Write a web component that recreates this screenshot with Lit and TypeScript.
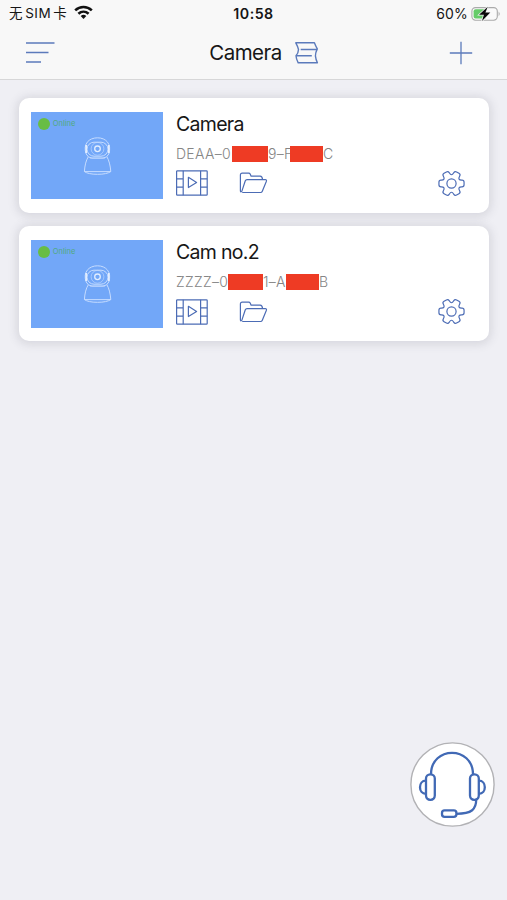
import { LitElement, html, css } from "lit";
import { customElement, property } from "lit/decorators.js";

interface Segment {
  text?: string;
  width: number;
}

interface Device {
  name: string;
  serial: Segment[];
}

const devices: Device[] = [
  {
    name: "Camera",
    serial: [
      { text: "DEAA–0", width: 56 },
      { width: 36 },
      { text: "9–F", width: 22 },
      { width: 33 },
      { text: "C", width: 10 },
    ],
  },
  {
    name: "Cam no.2",
    serial: [
      { text: "ZZZZ–0", width: 52 },
      { width: 35 },
      { text: "1–A", width: 23 },
      { width: 33 },
      { text: "B", width: 10 },
    ],
  },
];

// Outline of a six-toothed gear centred on the origin.
function gearPath(): string {
  const points: [number, number][] = [];
  for (let i = 0; i < 6; i++) {
    for (const [offset, radius] of [[-23, 8.8], [-15, 13], [15, 13], [23, 8.8]]) {
      const a = ((i * 60 + offset) * Math.PI) / 180;
      points.push([Math.cos(a) * radius, Math.sin(a) * radius]);
    }
  }
  const n = points.length;
  let d = "";
  points.forEach((p, i) => {
    const prev = points[(i + n - 1) % n];
    const next = points[(i + 1) % n];
    const toward = (q: [number, number]) => {
      const len = Math.hypot(q[0] - p[0], q[1] - p[1]);
      const t = Math.min(2, len / 2) / len;
      return `${(p[0] + (q[0] - p[0]) * t).toFixed(2)} ${(p[1] + (q[1] - p[1]) * t).toFixed(2)}`;
    };
    d += `${i ? "L" : "M"}${toward(prev)}Q${p[0].toFixed(2)} ${p[1].toFixed(2)} ${toward(next)}`;
  });
  return d + "Z";
}

const gear = gearPath();

@customElement("status-bar")
class StatusBar extends LitElement {
  static styles = css`
    :host { display: grid; grid-template-columns: 1fr auto 1fr; align-items: center; height: 27px; padding: 0 6px 0 9px; color: #151515; font: 14px/27px Inter, "Noto Sans CJK SC", sans-serif; }
    .left, .right { display: flex; align-items: center; }
    .carrier { font-size: 13.5px; letter-spacing: 0.45px; white-space: nowrap; word-spacing: -2px; }
    .wifi { margin: -2px 0 0 7px; }
    .time { font-weight: 600; font-size: 14.2px; letter-spacing: 0.5px; margin-left: -3px; }
    .right { justify-content: flex-end; gap: 3px; }
    .percent { font-size: 14px; letter-spacing: 0.2px; }
    svg { display: block; }
  `;
  render() {
    return html`
      <div class="left">
        <span class="carrier">无 SIM 卡</span>
        <svg class="wifi" width="19" height="15" viewBox="0 0 19 15">
          <g fill="none" stroke="#111" stroke-width="2.6">
            <path d="M1.2 5.4C6 .9 13 .9 17.8 5.4" />
            <path d="M4.4 8.7C7.4 6 11.6 6 14.6 8.7" />
          </g>
          <path d="M6.7 11Q9.5 8.6 12.3 11L9.5 14Z" fill="#111" />
        </svg>
      </div>
      <span class="time">10:58</span>
      <div class="right">
        <span class="percent">60%</span>
        <svg width="30" height="16" viewBox="0 0 30 16">
          <rect x=".9" y="1.6" width="25.4" height="12.6" rx="3.6" fill="#fafafa" stroke="#aaa" stroke-width="1.1" />
          <path d="M4.6 3.2H14.8V12.6H4.6Q2.6 12.6 2.6 10.6V5.2Q2.6 3.2 4.6 3.2Z" fill="#66cc6a" />
          <path d="M27.6 5.6Q29.8 7.9 27.6 10.2Z" fill="#aaa" />
          <path d="M16.8 .8L8 8.8H12.9L11 15L19.3 6.6H14.4Z" fill="#0b0b0b" stroke="#f8f8f8" stroke-width="1.4" paint-order="stroke" />
        </svg>
      </div>
    `;
  }
}

@customElement("nav-bar")
class NavBar extends LitElement {
  static styles = css`
    :host { display: grid; grid-template-columns: 1fr auto 1fr; align-items: center; height: 52px; padding: 0 34px 0 26px; }
    .title { display: flex; align-items: center; gap: 13px; margin-left: 29px; color: #161616; font: 20.5px/26px Inter, sans-serif; letter-spacing: -0.55px; }
    .add { justify-self: end; }
    svg { display: block; fill: none; stroke: #5b7abb; }
  `;
  render() {
    return html`
      <svg width="30" height="22" viewBox="0 0 30 22" stroke-width="1.5">
        <path d="M0 .9H28.5M0 10.4H22.5M0 19.9H15" />
      </svg>
      <div class="title">
        <span>Camera</span>
        <svg width="24" height="22" viewBox="0 0 24 22" stroke-width="1.4" stroke-linejoin="round">
          <path d="M.8 .8H19.4Q20.6 4 22.3 6.9Q20.4 10.6 20.4 13.9Q20.8 17.5 22.4 20.8H3.2Q1.2 17.2 1 13.8Q3.4 11 3.5 7.5Q2.7 4.2 .8 .8ZM5.7 7.5H22M1 13.8H16.8" />
        </svg>
      </div>
      <svg class="add" width="24" height="24" viewBox="0 0 24 24" stroke-width="1.3">
        <path d="M.8 12H23.2M12 .8V23.2" />
      </svg>
    `;
  }
}

@customElement("camera-preview")
class CameraPreview extends LitElement {
  static styles = css`
    :host { display: block; width: 132px; height: 87.5px; background: #72a7f8; position: relative; }
    .status { display: flex; align-items: center; gap: 3px; position: absolute; left: 6.5px; top: 6px; color: #4aab63; font: 7.5px/12px Inter, sans-serif; }
    .dot { width: 12px; height: 12px; border-radius: 50%; background: #68bd45; }
    .label { opacity: 0.8; }
    .device { display: block; position: absolute; left: 52px; top: 25px; }
  `;
  render() {
    return html`
      <div class="status"><span class="dot"></span><span class="label">Online</span></div>
      <svg class="device" width="30" height="39" viewBox="0 0 30 39" fill="none" stroke="#c6dcff" stroke-width="1">
        <path d="M3.2 17C-.5 7 6 .8 14.5 .8S29 7 25.8 17Q24 21 20 21H9Q5 21 3.2 17Z" />
        <rect x="4" y="5.2" width="21" height="14" rx="7" />
        <circle cx="14.5" cy="11.8" r="6.4" stroke-width=".6" />
        <circle cx="14.5" cy="11.8" r="2.8" stroke="#e1edff" stroke-width="1.3" />
        <path d="M3.2 8V16M25.8 8V16" stroke="#e1edff" stroke-width="1.7" />
        <path d="M5.2 20Q2 25 1.4 34.5Q5 37.3 14.5 37.3T27.8 34.5Q27 25 24 20M1.4 34.6H27.8" />
        <path d="M7 21.3H22" stroke-width=".6" />
      </svg>
    `;
  }
}

@customElement("device-card")
class DeviceCard extends LitElement {
  @property({ attribute: false }) device!: Device;
  static styles = css`
    :host { display: flex; box-sizing: border-box; height: 115px; padding: 14px 24px 0 12.3px; border-radius: 10px; background: #fff; box-shadow: 0 1px 10px 2px rgba(70, 70, 90, 0.15); }
    .info { flex: 1; display: flex; flex-direction: column; margin-left: 12.7px; }
    .name { height: 24px; color: #161616; font: 19.5px/24px Inter, sans-serif; letter-spacing: -0.7px; }
    .serial { display: flex; height: 16px; margin-top: 10px; color: #858585; font: 300 14px/16px Inter, sans-serif; letter-spacing: 0.3px; }
    .part { white-space: nowrap; }
    .mask { background: #ee3b24; }
    .actions { display: flex; align-items: center; height: 28px; margin-top: 7.5px; }
    .folder { margin-left: 31px; }
    .gear { margin-left: auto; }
    svg { display: block; fill: none; stroke: #4c6cb5; stroke-width: 1.2; stroke-linejoin: round; }
  `;
  render() {
    return html`
      <camera-preview></camera-preview>
      <div class="info">
        <span class="name">${this.device.name}</span>
        <div class="serial">
          ${this.device.serial.map((s) =>
            s.text
              ? html`<span class="part" style="width:${s.width}px">${s.text}</span>`
              : html`<span class="mask" style="width:${s.width}px"></span>`
          )}
        </div>
        <div class="actions">
          <svg width="32" height="26" viewBox="0 0 32 26">
            <rect x=".6" y=".8" width="30.6" height="24.4" rx=".8" />
            <path d="M7.2 .8V25.2M24.6 .8V25.2M.6 8.9H7.2M.6 17.1H7.2M24.6 8.9H31.2M24.6 17.1H31.2M12.4 7.3L20.6 12.4L12.4 17.5Z" />
          </svg>
          <svg class="folder" width="29" height="22" viewBox="0 0 29 22">
            <path d="M3.2 20.5H21.6Q22.8 20.5 23.3 19.2L27.4 9.2Q27.8 7.6 26.3 7.6H8Q6.8 7.6 6.3 8.8L2.8 19.4Q1.4 20.6 1.4 18.4V3Q1.4 1.2 3.2 1.2H9.6Q10.8 1.2 11.3 2.3L12.1 4.2H21.2Q23.2 4.2 23.6 7.6" />
          </svg>
          <svg class="gear" width="27" height="27" viewBox="-13.5 -13.5 27 27">
            <path d=${gear} />
            <circle r="4.6" />
          </svg>
        </div>
      </div>
    `;
  }
}

@customElement("app-root")
class AppRoot extends LitElement {
  static styles = css`
    :host { display: block; position: relative; box-sizing: border-box; width: 100%; height: 900px; overflow: hidden; background: #efeff4; }
    .header { background: #f8f8f8; border-bottom: 1px solid #d7d7d8; }
    .list { display: flex; flex-direction: column; gap: 13.4px; padding: 17.8px 18.5px 0 19px; }
    .support { position: absolute; left: 410px; top: 742px; display: block; }
  `;
  render() {
    return html`
      <header class="header">
        <status-bar></status-bar>
        <nav-bar></nav-bar>
      </header>
      <main class="list">
        ${devices.map((d) => html`<device-card .device=${d}></device-card>`)}
      </main>
      <svg class="support" width="85" height="85" viewBox="0 0 85 85" fill="none" stroke="#4169b5" stroke-width="2.3">
        <circle cx="42.5" cy="42.5" r="41.6" fill="#fff" stroke="#b2b2b5" stroke-width="1.4" />
        <path d="M21 32.5C21 3.6 63 3.6 63 32.5" />
        <rect x="16" y="32.4" width="8.8" height="25.4" rx="4.2" />
        <rect x="60" y="32.4" width="8.8" height="25.4" rx="4.2" />
        <path d="M16 38.6C8 38.6 8 51.8 16 51.8M68.8 38.6C76.8 38.6 76.8 51.8 68.8 51.8" />
        <path d="M66.2 57.6C66.2 67 62 71.8 46.4 71.8" />
        <rect x="32" y="68.4" width="14.4" height="6.4" rx="2.6" />
      </svg>
    `;
  }
}
